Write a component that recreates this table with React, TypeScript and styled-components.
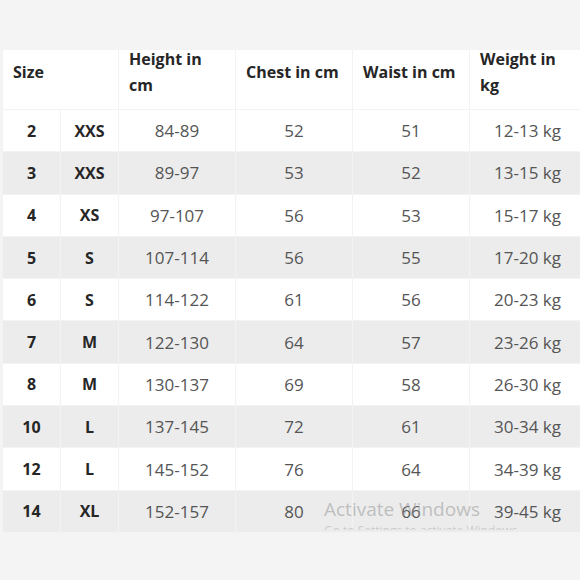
import React from "react";
import styled, { createGlobalStyle } from "styled-components";

const Global = createGlobalStyle`
  html, body { margin: 0; padding: 0; background: #f4f4f4; }
  body { font-family: "Open Sans", sans-serif; }
`;

const Page = styled.div`
  position: relative;
  width: 580px;
  height: 580px;
  overflow: hidden;
  background: #f4f4f4;
  padding: 49px 0 0 2px;
  box-sizing: border-box;
`;

const Table = styled.table`
  border-collapse: separate;
  border-spacing: 1px;
  background: #f3f3f3;
  table-layout: fixed;
  width: 584px;
`;

const HeadCell = styled.th`
  background: #ffffff;
  height: 59px;
  padding: 0 12px 0 10px;
  text-align: left;
  vertical-align: middle;
  font-weight: 700;
  font-size: 16px;
  line-height: 26px;
  color: #262626;
  box-sizing: border-box;
`;

const HeadLabel = styled.div`
  margin: -8px 0 8px;
`;

const Row = styled.tr<{ $alt: boolean }>`
  background: ${(p) => (p.$alt ? "#ececec" : "#ffffff")};
`;

const Cell = styled.td<{ $bold?: boolean }>`
  height: 41.3px;
  padding: 0;
  text-align: center;
  vertical-align: middle;
  font-size: ${(p) => (p.$bold ? 16 : 17)}px;
  font-weight: ${(p) => (p.$bold ? 700 : 400)};
  color: ${(p) => (p.$bold ? "#262626" : "#555")};
  box-sizing: border-box;
`;

const Watermark = styled.div`
  position: absolute;
  left: 324px;
  top: 496px;
  font-family: "Open Sans", sans-serif;
  color: rgba(150, 150, 150, 0.55);
  pointer-events: none;
`;

const WatermarkTitle = styled.div`
  font-size: 19px;
  line-height: 26px;
`;

const WatermarkSub = styled.div`
  font-size: 12px;
  line-height: 14px;
  height: 6px;
  overflow: hidden;
  margin-top: 2px;
  color: rgba(150, 150, 150, 0.4);
`;

const rows: [string, string, string, string, string, string][] = [
  ["2", "XXS", "84-89", "52", "51", "12-13 kg"],
  ["3", "XXS", "89-97", "53", "52", "13-15 kg"],
  ["4", "XS", "97-107", "56", "53", "15-17 kg"],
  ["5", "S", "107-114", "56", "55", "17-20 kg"],
  ["6", "S", "114-122", "61", "56", "20-23 kg"],
  ["7", "M", "122-130", "64", "57", "23-26 kg"],
  ["8", "M", "130-137", "69", "58", "26-30 kg"],
  ["10", "L", "137-145", "72", "61", "30-34 kg"],
  ["12", "L", "145-152", "76", "64", "34-39 kg"],
  ["14", "XL", "152-157", "80", "66", "39-45 kg"],
];

const headers = ["Height in cm", "Chest in cm", "Waist in cm", "Weight in kg"];

export default function App() {
  return (
    <>
      <Global />
      <Page>
        <Table>
          <colgroup>
            <col style={{ width: 57 }} />
            <col style={{ width: 57 }} />
            <col style={{ width: 116 }} />
            <col style={{ width: 116 }} />
            <col style={{ width: 116 }} />
            <col style={{ width: 115 }} />
          </colgroup>
          <thead>
            <tr>
              <HeadCell colSpan={2}>
                <HeadLabel>Size</HeadLabel>
              </HeadCell>
              {headers.map((h) => (
                <HeadCell key={h}>
                  <HeadLabel>{h}</HeadLabel>
                </HeadCell>
              ))}
            </tr>
          </thead>
          <tbody>
            {rows.map((r, i) => (
              <Row key={r[0]} $alt={i % 2 === 1}>
                <Cell $bold>{r[0]}</Cell>
                <Cell $bold>{r[1]}</Cell>
                <Cell>{r[2]}</Cell>
                <Cell>{r[3]}</Cell>
                <Cell>{r[4]}</Cell>
                <Cell>{r[5]}</Cell>
              </Row>
            ))}
          </tbody>
        </Table>
        <Watermark>
          <WatermarkTitle>Activate Windows</WatermarkTitle>
          <WatermarkSub>Go to Settings to activate Windows.</WatermarkSub>
        </Watermark>
      </Page>
    </>
  );
}
